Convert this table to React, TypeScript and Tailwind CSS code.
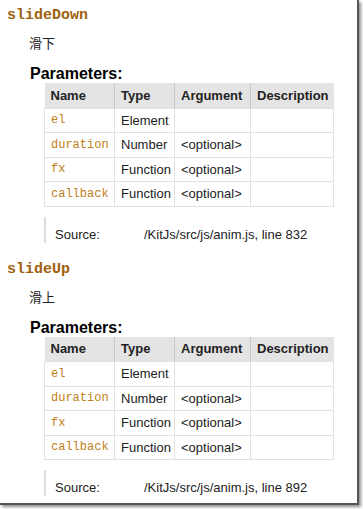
const params = [
  { name: "el", type: "Element", arg: "" },
  { name: "duration", type: "Number", arg: "<optional>" },
  { name: "fx", type: "Function", arg: "<optional>" },
  { name: "callback", type: "Function", arg: "<optional>" },
];

const sans = "font-['Liberation_Sans','Arial',sans-serif]";
const mono = "font-['Liberation_Mono','DejaVu_Sans_Mono',monospace]";

const Method = ({ name, desc, line }: { name: string; desc: string; line: number }) => (
  <div>
    <h4 className={`${mono} text-[15px] font-bold text-[#a0620e] pl-[7px] leading-[20px] pt-[6px]`}>{name}</h4>
    <div className="pl-[29px] mt-[9px] text-[13px] text-[#222] leading-[16px] font-['Noto_Sans_CJK_SC',sans-serif]">
      {desc}
    </div>
    <h5 className={`${sans} text-[16px] font-bold text-black pl-[30px] mt-[14px] leading-[18px]`}>Parameters:</h5>
    <table className={`${sans} ml-[44px] w-[289px] table-fixed border-collapse text-[13px] text-[#222]`}>
      <thead>
        <tr className="bg-[#e4e4e4] h-[25px]">
          <th className="w-[70px] border-r border-[#c8c8c8] text-left pl-[6px] font-bold">Name</th>
          <th className="w-[60px] border-r border-[#c8c8c8] text-left pl-[6px] font-bold">Type</th>
          <th className="w-[76px] border-r border-[#c8c8c8] text-left pl-[6px] font-bold">Argument</th>
          <th className="w-[83px] text-left pl-[6px] font-bold">Description</th>
        </tr>
      </thead>
      <tbody>
        {params.map((p) => (
          <tr key={p.name} className="h-[24.5px]">
            <td className={`${mono} text-[12px] text-[#c08020] border border-[#e2e2e2] pl-[6px]`}>{p.name}</td>
            <td className="border border-[#e2e2e2] pl-[6px]">{p.type}</td>
            <td className="border border-[#e2e2e2] pl-[6px]">{p.arg}</td>
            <td className="border border-[#e2e2e2]"></td>
          </tr>
        ))}
      </tbody>
    </table>
    <div className={`${sans} ml-[44px] mt-[10px] border-l-2 border-[#dcdcdc] h-[26px] flex items-end text-[13px] text-[#222] leading-[16px]`}>
      <span className="w-[98px] pl-[9px]">Source:</span>
      <span>/KitJs/src/js/anim.js, line {line}</span>
    </div>
  </div>
);

export default function App() {
  return (
    <div className="w-[363px] h-[509px] bg-white">
      <div className="w-[359px] h-[505px] bg-white border-r-2 border-b-2 border-[#555] shadow-[2px_2px_3px_rgba(0,0,0,0.45)] overflow-hidden">
        <Method name="slideDown" desc="滑下" line={832} />
        <div className="h-[11px]" />
        <Method name="slideUp" desc="滑上" line={892} />
      </div>
    </div>
  );
}
